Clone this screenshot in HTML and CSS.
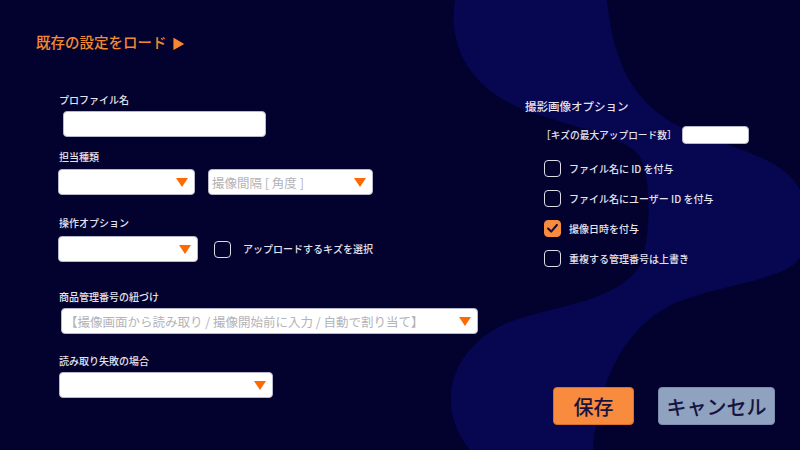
FILE: index.html
```html
<!DOCTYPE html>
<html lang="ja">
<head>
    <meta charset="UTF-8">
    <meta name="viewport" content="width=device-width, initial-scale=1.0">
    <title>撮影設定</title>
    <link rel="stylesheet" href="styles.css">
</head>
<body>
<div class="page">
    <svg class="wave" viewBox="0 0 800 450" preserveAspectRatio="none" aria-hidden="true">
        <path d="M455 0 C448 40 465 85 520 108 C570 128 630 135 642 160 C652 190 650 240 640 265 C620 300 560 305 515 320 C452 342 432 405 470 450 L593 450 C598 390 618 330 675 303 C730 282 785 280 800 258 L800 190 C785 160 740 150 700 135 C645 115 615 80 607 0 Z"/>
    </svg>

    <div class="left">
        <div class="load-link">既存の設定をロード <span class="play">▶</span></div>

        <div class="form">
            <div class="field profile">
                <label>プロファイル名</label>
                <div class="text-input name-input"></div>
            </div>

            <div class="field type">
                <label>担当種類</label>
                <div class="row">
                    <div class="select type-select">
                        <span></span>
                        <svg class="arrow" viewBox="0 0 12 9"><polygon points="0,0 12,0 6,9"/></svg>
                    </div>
                    <div class="select angle-select">
                        <span class="placeholder">撮像間隔 [ 角度 ]</span>
                        <svg class="arrow" viewBox="0 0 12 9"><polygon points="0,0 12,0 6,9"/></svg>
                    </div>
                </div>
            </div>

            <div class="field operation">
                <label>操作オプション</label>
                <div class="row">
                    <div class="select op-select">
                        <span></span>
                        <svg class="arrow" viewBox="0 0 12 9"><polygon points="0,0 12,0 6,9"/></svg>
                    </div>
                    <div class="check upload-check">
                        <span class="box"></span>
                        <span class="check-label">アップロードするキズを選択</span>
                    </div>
                </div>
            </div>

            <div class="field link">
                <label>商品管理番号の紐づけ</label>
                <div class="select link-select">
                    <span class="placeholder">【撮像画面から読み取り / 撮像開始前に入力 / 自動で割り当て】</span>
                    <svg class="arrow" viewBox="0 0 12 9"><polygon points="0,0 12,0 6,9"/></svg>
                </div>
            </div>

            <div class="field failure">
                <label>読み取り失敗の場合</label>
                <div class="select fail-select">
                    <span></span>
                    <svg class="arrow" viewBox="0 0 12 9"><polygon points="0,0 12,0 6,9"/></svg>
                </div>
            </div>
        </div>
    </div>

    <div class="right">
        <h3>撮影画像オプション</h3>

        <div class="max-row">
            <span>［キズの最大アップロード数］</span>
            <div class="text-input max-input"></div>
        </div>

        <div class="options">
            <div class="check">
                <span class="box"></span>
                <span class="check-label">ファイル名に ID を付与</span>
            </div>
            <div class="check">
                <span class="box"></span>
                <span class="check-label">ファイル名にユーザー ID を付与</span>
            </div>
            <div class="check">
                <span class="box checked">
                    <svg viewBox="0 0 17 17"><polyline points="3.5,8.5 7,12 13.5,4.5"/></svg>
                </span>
                <span class="check-label">撮像日時を付与</span>
            </div>
            <div class="check">
                <span class="box"></span>
                <span class="check-label">重複する管理番号は上書き</span>
            </div>
        </div>

        <div class="actions">
            <button class="save-btn">保存</button>
            <button class="cancel-btn">キャンセル</button>
        </div>
    </div>
</div>
</body>
</html>
```

FILE: styles.css
```css
* {
    margin: 0;
    padding: 0;
    box-sizing: border-box;
    font-family: "Noto Sans CJK JP", "Noto Sans", sans-serif;
}
body {
    background-color: #03022f;
    overflow: hidden;
}
.page {
    position: relative;
    display: flex;
    width: 800px;
    height: 450px;
}
.wave {
    position: absolute;
    top: 0;
    left: 0;
    width: 800px;
    height: 450px;
    z-index: 0;
}
.wave path { fill: #060651; }

.left, .right { position: relative; z-index: 1; }

/* left column */
.left {
    width: 525px;
    padding: 32px 0 0 36px;
}
.load-link {
    height: 20px;
    color: #f4892f;
    font-size: 14.5px;
    font-weight: 500;
    line-height: 20px;
}
.load-link .play {
    font-size: 13px;
    line-height: 1;
    margin-left: 2px;
}
.form {
    margin: 41px 0 0 22px;
}
.field label {
    display: block;
    color: #e4e4ee;
    font-size: 10px;
    font-weight: 500;
    line-height: 14px;
    padding-left: 1px;
    margin-bottom: 4px;
}
.type { margin-top: 13px; }
.type label { margin-bottom: 5px; }
.operation { margin-top: 21px; }
.operation label { margin-bottom: 6px; }
.link { margin-top: 28px; }
.failure { margin-top: 20px; }

.row {
    display: flex;
    align-items: center;
}
.text-input {
    background: #fff;
    border: 1px solid #b8b8cc;
    border-radius: 4px;
}
.name-input {
    width: 203px;
    height: 26px;
    margin-left: 5px;
}
.select {
    display: flex;
    align-items: center;
    justify-content: space-between;
    height: 26px;
    padding: 0 6px 0 3px;
    background: #fff;
    border: 1px solid #b8b8cc;
    border-radius: 4px;
}
.placeholder {
    color: #b3b3b8;
    font-size: 12.5px;
    white-space: nowrap;
}
.arrow {
    width: 12px;
    height: 9px;
    flex-shrink: 0;
}
.arrow polygon { fill: #ff6a00; }
.type-select { width: 137px; }
.angle-select { width: 165px; margin-left: 13px; }
.op-select { width: 140px; }
.link-select { width: 417px; margin-left: 3px; }
.fail-select { width: 214px; margin-left: 1px; }
.upload-check { margin-left: 16px; }
.upload-check .check-label { margin-left: 12px; font-size: 10px; }

/* checkboxes */
.check {
    display: flex;
    align-items: center;
}
.box {
    display: flex;
    width: 17px;
    height: 17px;
    border: 1.5px solid #dcdce6;
    border-radius: 4px;
}
.box.checked {
    background: #f98b3e;
    border-color: #f98b3e;
}
.box svg {
    width: 100%;
    height: 100%;
}
.box polyline {
    fill: none;
    stroke: #15113c;
    stroke-width: 2.4;
    stroke-linecap: round;
    stroke-linejoin: round;
}
.check-label {
    color: #e4e4ee;
    font-size: 10px;
    font-weight: 500;
    line-height: 14px;
    margin-left: 8px;
    white-space: nowrap;
}

/* right column */
.right {
    flex: 1;
    display: flex;
    flex-direction: column;
    padding: 98px 25px 25px 0;
}
.right h3 {
    color: #e4e4ee;
    font-size: 11.5px;
    font-weight: 500;
    line-height: 16px;
}
.max-row {
    display: flex;
    align-items: center;
    margin-top: 12px;
    padding-left: 16px;
    height: 18px;
}
.max-row span {
    color: #e4e4ee;
    font-size: 9.7px;
    font-weight: 500;
    white-space: nowrap;
}
.max-input {
    width: 67px;
    height: 18px;
    margin-left: 5px;
    border-radius: 4px;
}
.options {
    display: flex;
    flex-direction: column;
    gap: 13px;
    margin-top: 16px;
    padding-left: 19px;
}
.actions {
    display: flex;
    justify-content: flex-end;
    gap: 24px;
    margin-top: auto;
}
.actions button {
    height: 38px;
    border-radius: 4px;
    font-size: 20px;
    font-weight: 500;
    color: #17143f;
    cursor: pointer;
}
.save-btn {
    width: 81px;
    background: #f98b3e;
    border: 1px solid #d96f28;
}
.cancel-btn {
    width: 117px;
    background: #8fa2bf;
    border: 1px solid #7a8db0;
}
```
